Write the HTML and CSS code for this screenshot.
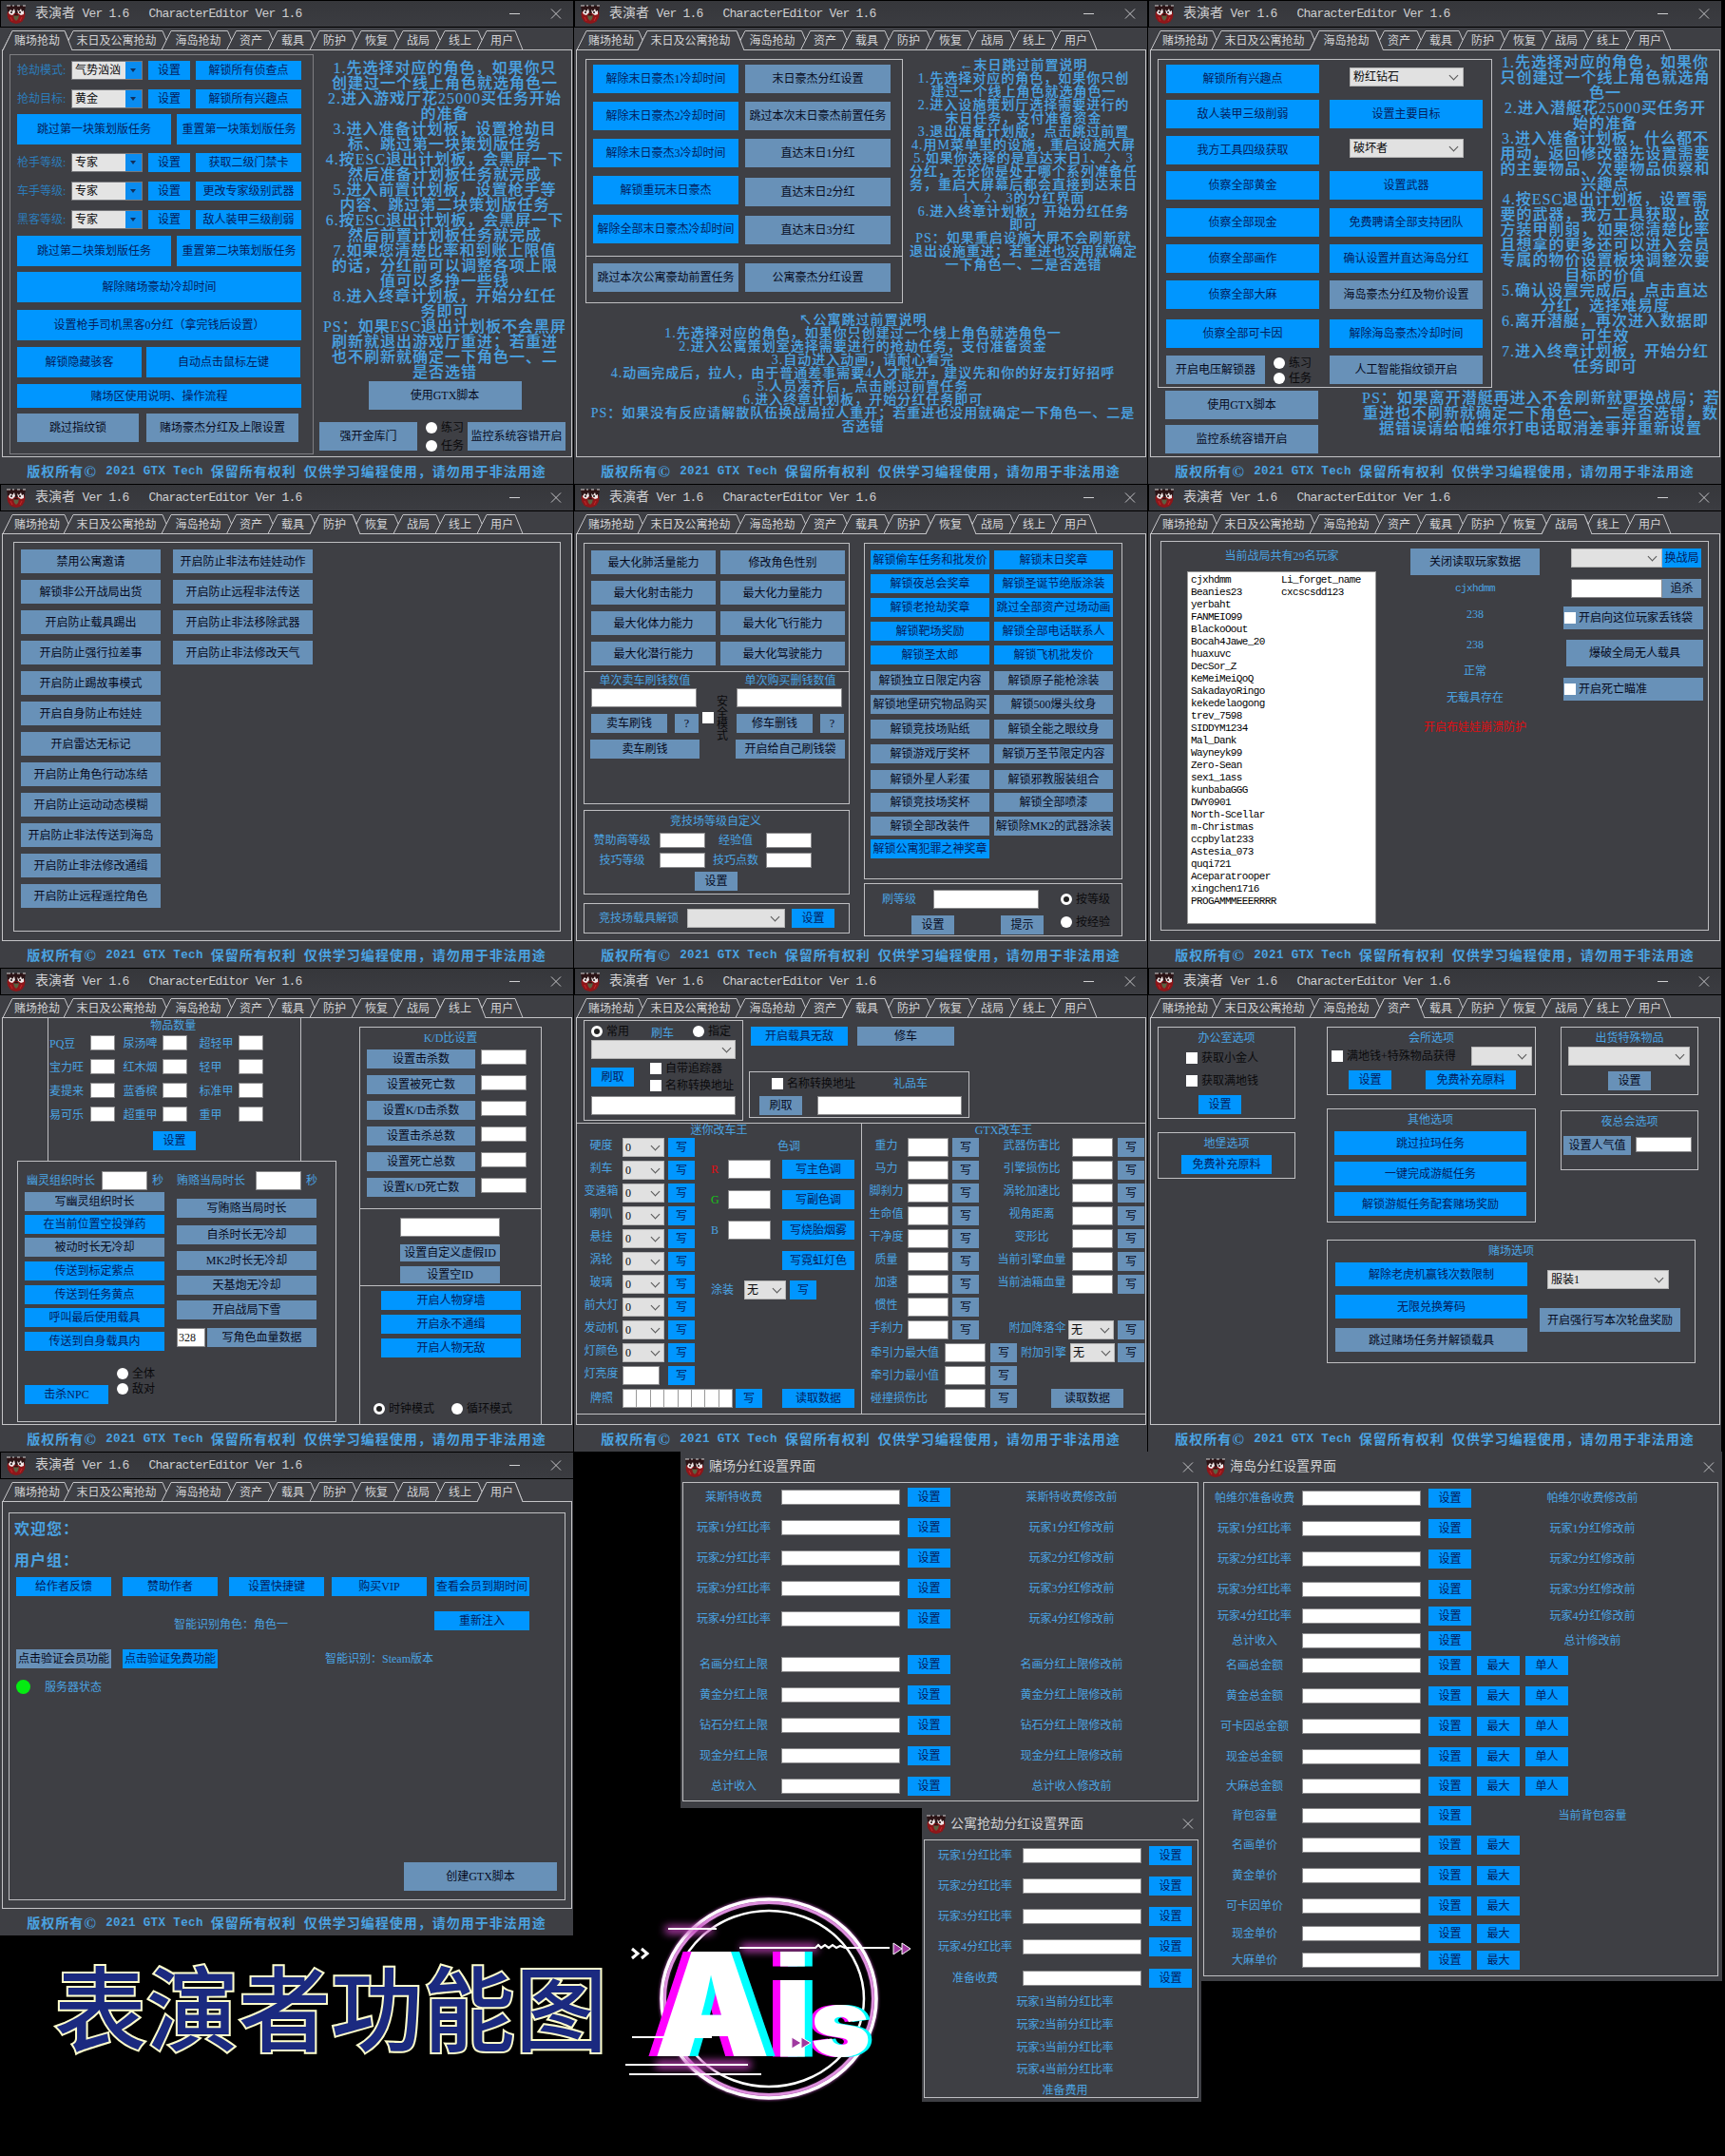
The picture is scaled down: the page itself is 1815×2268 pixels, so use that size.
FILE: index.html
```html
<!DOCTYPE html>
<html lang="zh-CN">
<head>
<meta charset="utf-8">
<title>表演者功能图</title>
<link rel="stylesheet" href="styles.css">
</head>
<body>
<svg class="defs" width="0" height="0">
  <symbol id="app" viewBox="0 0 22 20">
    <circle cx="11" cy="10.500" r="9.400" fill="#8e1619"/>
    <path d="M1 1h20l-1 6-3 2H5L2 7z" fill="#2c1416"/>
    <path d="M1 1h4M7 1h2M12 1h3M18 1h3" stroke="#d8d4d4" stroke-width="1"/>
    <path d="M3 8l2-3 2 2 2-3 1 4-3 3-3-1zM12 5l2 2 2-3 1 3 2-1 0 4-3 1-3-2z" fill="#efe6e6"/>
    <path d="M5 8h2M14 8h2M8 12l3-2 3 2" stroke="#201012" stroke-width="1.3" fill="none"/>
    <path d="M8 11l3 1 3-1-1 4-2 2-2-2z" fill="#5b6142"/>
    <path d="M5 13l2 4M17 13l-2 4" stroke="#c9282b"/>
  </symbol>
  <symbol id="strip" viewBox="0 0 603 21">
    <path fill="none" stroke="#c4c4c7" d="M3 20.5L13 .5H68L72 10M67 20.5L77 .5H171L175 10M170 20.5L180 .5H239.5L243.5 10M238.5 20.5L248.5 .5H283L287 10M282 20.5L292 .5H327L331 10M326 20.5L336 .5H371L375 10M370 20.5L380 .5H415L419 10M414 20.5L424 .5H459L463 10M458 20.5L468 .5H503L507 10M502 20.5L512 .5H542L550 20.5"/>
  </symbol>
  <symbol id="x" viewBox="0 0 12 12"><path d="M.5.5l11 11M11.5.5l-11 11" stroke="#d0d0d2" fill="none"/></symbol>
</svg>

<main class="desk">

<!-- 赌场抢劫 -->
<section class="win">
  <header><svg class="ico"><use href="#app"/></svg><h2>表演者 <span>Ver 1.6</span><span>CharacterEditor Ver 1.6</span></h2><i class="min"></i><svg class="x"><use href="#x"/></svg></header>
  <nav><svg><use href="#strip"/><path d="M3 21L13 .5H68L76 21"/></svg><b>赌场抢劫</b><b>末日及公寓抢劫</b><b>海岛抢劫</b><b>资产</b><b>载具</b><b>防护</b><b>恢复</b><b>战局</b><b>线上</b><b>用户</b></nav>
  <div class="page p1">
    <div class="box rows">
      <div class="set"><span class="t">抢劫模式:</span><div class="old">气势汹汹</div><button class="p">设置</button><button class="p">解锁所有侦查点</button></div>
      <div class="set"><span class="t">抢劫目标:</span><div class="old">黄金</div><button class="p">设置</button><button class="p">解锁所有兴趣点</button></div>
      <div class="wide-l tall"><button class="p">跳过第一块策划版任务</button><button class="p">重置第一块策划版任务</button></div>
      <div class="set"><span class="t">枪手等级:</span><div class="old">专家</div><button class="p">设置</button><button class="p">获取二级门禁卡</button></div>
      <div class="set"><span class="t">车手等级:</span><div class="old">专家</div><button class="p">设置</button><button class="p">更改专家级别武器</button></div>
      <div class="set"><span class="t">黑客等级:</span><div class="old">专家</div><button class="p">设置</button><button class="p">敌人装甲三级削弱</button></div>
      <div class="wide-l tall"><button class="p">跳过第二块策划版任务</button><button class="p">重置第二块策划版任务</button></div>
      <div class="one tall"><button class="p">解除赌场豪劫冷却时间</button></div>
      <div class="one tall"><button class="p">设置枪手司机黑客0分红（拿完钱后设置）</button></div>
      <div class="wide-r tall"><button class="p">解锁隐藏骇客</button><button class="p">自动点击鼠标左键</button></div>
      <div class="one mid"><button class="p">赌场区使用说明、操作流程</button></div>
      <div class="wide-r h30"><button>跳过指纹锁</button><button>赌场豪杰分红及上限设置</button></div>
    </div>
    <div class="side">
      <p class="help">1.先选择对应的角色，如果你只<br>创建过一个线上角色就选角色一<br>2.进入游戏厅花25000买任务开始<br>的准备<br>3.进入准备计划板，设置抢劫目<br>标、跳过第一块策划版任务<br>4.按ESC退出计划板，会黑屏一下<br>然后准备计划板任务就完成<br>5.进入前置计划板，设置枪手等<br>内容、跳过第二块策划版任务<br>6.按ESC退出计划板，会黑屏一下<br>然后前置计划板任务就完成<br>7.如果您清楚比率和到账上限值<br>的话，分红前可以调整各项上限<br>值可以多挣一些钱<br>8.进入终章计划板，开始分红任<br>务即可<br>PS：如果ESC退出计划板不会黑屏<br>刷新就退出游戏厅重进；若重进<br>也不刷新就确定一下角色一、二<br>是否选错</p>
      <button class="gtx">使用GTX脚本</button>
      <div class="foot"><button>强开金库门</button><div class="radios"><label><i class="rd"></i>练习</label><label><i class="rd"></i>任务</label></div><button>监控系统容错开启</button></div>
    </div>
  </div>
  <footer>版权所有<em>©</em><span>&nbsp;2021 GTX Tech </span>保留所有权利<span>&nbsp;</span>仅供学习编程使用，请勿用于非法用途</footer>
</section>

<!-- 末日及公寓抢劫 -->
<section class="win">
  <header><svg class="ico"><use href="#app"/></svg><h2>表演者 <span>Ver 1.6</span><span>CharacterEditor Ver 1.6</span></h2><i class="min"></i><svg class="x"><use href="#x"/></svg></header>
  <nav><svg><use href="#strip"/><path d="M67 21L77 .5H171L179 21"/></svg><b>赌场抢劫</b><b>末日及公寓抢劫</b><b>海岛抢劫</b><b>资产</b><b>载具</b><b>防护</b><b>恢复</b><b>战局</b><b>线上</b><b>用户</b></nav>
  <div class="page p2">
    <div class="top">
      <div>
        <div class="box pair">
          <button class="p">解除末日豪杰1冷却时间</button><button>末日豪杰分红设置</button>
          <button class="p">解除末日豪杰2冷却时间</button><button>跳过本次末日豪杰前置任务</button>
          <button class="p">解除末日豪杰3冷却时间</button><button>直达末日1分红</button>
          <button class="p">解锁重玩末日豪杰</button><button class="low">直达末日2分红</button>
          <button class="p">解除全部末日豪杰冷却时间</button><button class="low1">直达末日3分红</button>
        </div>
        <div class="box pair second"><button>跳过本次公寓豪劫前置任务</button><button>公寓豪杰分红设置</button></div>
      </div>
      <p class="help sm">←末日跳过前置说明<br>1.先选择对应的角色，如果你只创<br>建过一个线上角色就选角色一<br>2.进入设施策划厅选择需要进行的<br>末日任务，支付准备资金<br>3.退出准备计划版，点击跳过前置<br>4.用M菜单里的设施，重启设施大屏<br>5.如果你选择的是直达末日1、2、3<br>分红，无论你是处于哪个系列准备任<br>务，重启大屏幕后都会直接到达末日<br>1、2、3的分红界面<br>6.进入终章计划板，开始分红任务<br>即可<br>PS：如果重启设施大屏不会刷新就<br>退出设施重进；若重进也没用就确定<br>一下角色一、二是否选错</p>
    </div>
    <p class="help sm">↖公寓跳过前置说明<br>1.先选择对应的角色，如果你只创建过一个线上角色就选角色一<br>2.进入公寓策划室选择需要进行的抢劫任务，支付准备资金<br>3.自动进入动画，请耐心看完<br>4.动画完成后，拉人，由于普通差事需要4人才能开，建议先和你的好友打好招呼<br>5.人员凑齐后，点击跳过前置任务<br>6.进入终章计划板，开始分红任务即可<br>PS：如果没有反应请解散队伍换战局拉人重开；若重进也没用就确定一下角色一、二是<br>否选错</p>
  </div>
  <footer>版权所有<em>©</em><span>&nbsp;2021 GTX Tech </span>保留所有权利<span>&nbsp;</span>仅供学习编程使用，请勿用于非法用途</footer>
</section>

<!-- 海岛抢劫 -->
<section class="win">
  <header><svg class="ico"><use href="#app"/></svg><h2>表演者 <span>Ver 1.6</span><span>CharacterEditor Ver 1.6</span></h2><i class="min"></i><svg class="x"><use href="#x"/></svg></header>
  <nav><svg><use href="#strip"/><path d="M170 21L180 .5H239.5L247.5 21"/></svg><b>赌场抢劫</b><b>末日及公寓抢劫</b><b>海岛抢劫</b><b>资产</b><b>载具</b><b>防护</b><b>恢复</b><b>战局</b><b>线上</b><b>用户</b></nav>
  <div class="page p3">
    <div class="top">
      <div class="box">
        <div class="rows">
          <button class="p">解锁所有兴趣点</button><button class="p">敌人装甲三级削弱</button><button class="p">我方工具四级获取</button><button class="p">侦察全部黄金</button><button class="p">侦察全部现金</button><button class="p">侦察全部画作</button><button class="p">侦察全部大麻</button><button class="p">侦察全部可卡因</button>
          <div class="volt"><button>开启电压解锁器</button><div class="radios"><label><i class="rd"></i>练习</label><label><i class="rd"></i>任务</label></div></div>
        </div>
        <div class="rows">
          <div class="sel">粉红钻石</div><button class="p">设置主要目标</button><div class="sel">破坏者</div><button class="p">设置武器</button><button class="p">免费聘请全部支持团队</button><button class="p">确认设置并直达海岛分红</button><button>海岛豪杰分红及物价设置</button><button class="p">解除海岛豪杰冷却时间</button><button>人工智能指纹锁开启</button>
        </div>
      </div>
      <p class="help">1.先选择对应的角色，如果你<br>只创建过一个线上角色就选角<br>色一<br>2.进入潜艇花25000买任务开<br>始的准备<br>3.进入准备计划板，什么都不<br>用动，返回修改器先设置需要<br>的主要物品、次要物品侦察和<br>兴趣点<br>4.按ESC退出计划板，设置需<br>要的武器，我方工具获取，敌<br>方装甲削弱，如果您清楚比率<br>且想拿的更多还可以进入会员<br>专属的物价设置板块调整次要<br>目标的价值<br>5.确认设置完成后，点击直达<br>分红，选择难易度<br>6.离开潜艇，再次进入数据即<br>可生效<br>7.进入终章计划板，开始分红<br>任务即可</p>
    </div>
    <div class="bottom">
      <div><button>使用GTX脚本</button><button>监控系统容错开启</button></div>
      <p class="help">PS：如果离开潜艇再进入不会刷新就更换战局；若<br>重进也不刷新就确定一下角色一、二是否选错，数<br>据错误请给帕维尔打电话取消差事并重新设置</p>
    </div>
  </div>
  <footer>版权所有<em>©</em><span>&nbsp;2021 GTX Tech </span>保留所有权利<span>&nbsp;</span>仅供学习编程使用，请勿用于非法用途</footer>
</section>

<!-- 防护 -->
<section class="win">
  <header><svg class="ico"><use href="#app"/></svg><h2>表演者 <span>Ver 1.6</span><span>CharacterEditor Ver 1.6</span></h2><i class="min"></i><svg class="x"><use href="#x"/></svg></header>
  <nav><svg><use href="#strip"/><path d="M326 21L336 .5H371L379 21"/></svg><b>赌场抢劫</b><b>末日及公寓抢劫</b><b>海岛抢劫</b><b>资产</b><b>载具</b><b>防护</b><b>恢复</b><b>战局</b><b>线上</b><b>用户</b></nav>
  <div class="page p4">
    <div class="box">
      <div><button>禁用公寓邀请</button><button>解锁非公开战局出货</button><button>开启防止载具踢出</button><button>开启防止强行拉差事</button><button>开启防止踢故事模式</button><button>开启自身防止布娃娃</button><button>开启雷达无标记</button><button>开启防止角色行动冻结</button><button>开启防止运动动态模糊</button><button>开启防止非法传送到海岛</button><button>开启防止非法修改通缉</button><button>开启防止远程遥控角色</button></div>
      <div><button>开启防止非法布娃娃动作</button><button>开启防止远程非法传送</button><button>开启防止非法移除武器</button><button>开启防止非法修改天气</button></div>
    </div>
  </div>
  <footer>版权所有<em>©</em><span>&nbsp;2021 GTX Tech </span>保留所有权利<span>&nbsp;</span>仅供学习编程使用，请勿用于非法用途</footer>
</section>

<!-- 恢复 -->
<section class="win">
  <header><svg class="ico"><use href="#app"/></svg><h2>表演者 <span>Ver 1.6</span><span>CharacterEditor Ver 1.6</span></h2><i class="min"></i><svg class="x"><use href="#x"/></svg></header>
  <nav><svg><use href="#strip"/><path d="M370 21L380 .5H415L423 21"/></svg><b>赌场抢劫</b><b>末日及公寓抢劫</b><b>海岛抢劫</b><b>资产</b><b>载具</b><b>防护</b><b>恢复</b><b>战局</b><b>线上</b><b>用户</b></nav>
  <div class="page p5">
    <div class="l">
      <div class="box skills"><button>最大化肺活量能力</button><button>修改角色性别</button><button>最大化射击能力</button><button>最大化力量能力</button><button>最大化体力能力</button><button>最大化飞行能力</button><button>最大化潜行能力</button><button>最大化驾驶能力</button></div>
      <div class="box cash">
        <div class="rows"><span class="t">单次卖车刷钱数值</span><input><div><button>卖车刷钱</button><button>?</button></div><button>卖车刷钱</button></div>
        <label class="safe"><i class="ck"></i><span>安全模式</span></label>
        <div class="rows"><span class="t">单次购买删钱数值</span><input><div><button>修车删钱</button><button>?</button></div><button>开启给自己刷钱袋</button></div>
      </div>
      <div class="box arena">
        <span class="t cap">竞技场等级自定义</span>
        <span class="t">赞助商等级</span><input><span class="t">经验值</span><input>
        <span class="t">技巧等级</span><input><span class="t">技巧点数</span><input>
        <button>设置</button>
      </div>
      <div class="box unlock"><span class="t">竞技场载具解锁</span><div class="sel"></div><button class="p">设置</button></div>
    </div>
    <div class="r">
      <div class="box rows awards">
        <button class="p">解锁偷车任务和批发价</button><button class="p">解锁末日奖章</button>
        <button class="p">解锁夜总会奖章</button><button class="p">解锁圣诞节绝版涂装</button>
        <button class="p">解锁老抢劫奖章</button><button class="p">跳过全部资产过场动画</button>
        <button class="p">解锁靶场奖励</button><button class="p">解锁全部电话联系人</button>
        <button class="p">解锁圣太郎</button><button class="p">解锁飞机批发价</button>
        <button>解锁独立日限定内容</button><button>解锁原子能枪涂装</button>
        <button>解锁地堡研究物品购买</button><button>解锁500爆头纹身</button>
        <button>解锁竞技场贴纸</button><button>解锁全能之眼纹身</button>
        <button>解锁游戏厅奖杯</button><button>解锁万圣节限定内容</button>
        <button>解锁外星人彩蛋</button><button>解锁邪教服装组合</button>
        <button>解锁竞技场奖杯</button><button>解锁全部喷漆</button>
        <button>解锁全部改装件</button><button>解锁除MK2的武器涂装</button>
        <button class="p">解锁公寓犯罪之神奖章</button>
      </div>
      <div class="box level">
        <div><span class="t">刷等级</span><input><br><button>设置</button><button>提示</button></div>
        <div class="radios"><label><i class="rd on"></i>按等级</label><label><i class="rd"></i>按经验</label></div>
      </div>
    </div>
  </div>
  <footer>版权所有<em>©</em><span>&nbsp;2021 GTX Tech </span>保留所有权利<span>&nbsp;</span>仅供学习编程使用，请勿用于非法用途</footer>
</section>

<!-- 战局 -->
<section class="win">
  <header><svg class="ico"><use href="#app"/></svg><h2>表演者 <span>Ver 1.6</span><span>CharacterEditor Ver 1.6</span></h2><i class="min"></i><svg class="x"><use href="#x"/></svg></header>
  <nav><svg><use href="#strip"/><path d="M414 21L424 .5H459L467 21"/></svg><b>赌场抢劫</b><b>末日及公寓抢劫</b><b>海岛抢劫</b><b>资产</b><b>载具</b><b>防护</b><b>恢复</b><b>战局</b><b>线上</b><b>用户</b></nav>
  <div class="page p6">
    <div class="box">
      <div class="players"><span class="t">当前战局共有29名玩家</span>
        <div class="list"><pre>cjxhdmm
Beanies23
yerbaht
FANMEIO99
BlackoOout
Bocah4Jawe_20
huaxuvc
DecSor_Z
KeMeiMeiQoQ
SakadayoRingo
kekedelaogong
trev_7598
SIDDYM1234
Mal_Dank
Wayneyk99
Zero-Sean
sex1_1ass
kunbabaGGG
DWY0901
North-Scellar
m-Christmas
ccpbylat233
Astesia_073
quqi721
Aceparatrooper
xingchen1716
PROGAMMMEEERRRR</pre><pre>Li_forget_name
cxcscsdd123</pre></div>
      </div>
      <div class="rows info"><button>关闭读取玩家数据</button><span class="t mono">cjxhdmm</span><span class="t">238</span><span class="t">238</span><span class="t">正常</span><span class="t">无载具存在</span><span class="t red">开启布娃娃崩溃防护</span></div>
      <div class="rows acts">
        <div><div class="sel"></div><button class="p">换战局</button></div>
        <div><input><button>追杀</button></div>
        <button class="chk"><i class="ck"></i>开启向这位玩家丢钱袋</button>
        <button>爆破全局无人载具</button>
        <button class="chk"><i class="ck"></i>开启死亡瞄准</button>
      </div>
    </div>
  </div>
  <footer>版权所有<em>©</em><span>&nbsp;2021 GTX Tech </span>保留所有权利<span>&nbsp;</span>仅供学习编程使用，请勿用于非法用途</footer>
</section>

<!-- 线上 -->
<section class="win">
  <header><svg class="ico"><use href="#app"/></svg><h2>表演者 <span>Ver 1.6</span><span>CharacterEditor Ver 1.6</span></h2><i class="min"></i><svg class="x"><use href="#x"/></svg></header>
  <nav><svg><use href="#strip"/><path d="M458 21L468 .5H503L511 21"/></svg><b>赌场抢劫</b><b>末日及公寓抢劫</b><b>海岛抢劫</b><b>资产</b><b>载具</b><b>防护</b><b>恢复</b><b>战局</b><b>线上</b><b>用户</b></nav>
  <div class="page p7">
    <div class="l">
      <div class="items">
        <span class="t cap">物品数量</span>
        <span class="t">PQ豆</span><input><span class="t">尿汤啤</span><input><span class="t">超轻甲</span><input>
        <span class="t">宝力旺</span><input><span class="t">红木烟</span><input><span class="t">轻甲</span><input>
        <span class="t">麦提来</span><input><span class="t">蓝香槟</span><input><span class="t">标准甲</span><input>
        <span class="t">易可乐</span><input><span class="t">超重甲</span><input><span class="t">重甲</span><input>
        <button class="p">设置</button>
      </div>
      <div class="box self">
        <div class="times"><span class="t">幽灵组织时长</span><input><span class="t">秒</span><span class="t">贿赂当局时长</span><input><span class="t">秒</span></div>
        <div class="cols">
          <div class="rows"><button>写幽灵组织时长</button><button class="p">在当前位置空投弹药</button><button>被动时长无冷却</button><button class="p">传送到标定紫点</button><button class="p">传送到任务黄点</button><button class="p">呼叫最后使用载具</button><button class="p">传送到自身载具内</button></div>
          <div class="rows"><button>写贿赂当局时长</button><button>自杀时长无冷却</button><button>MK2时长无冷却</button><button>天基炮无冷却</button><button>开启战局下雪</button><div class="hp"><input value="328"><button>写角色血量数据</button></div></div>
        </div>
        <div class="npc"><button class="p">击杀NPC</button><div class="radios"><label><i class="rd"></i>全体</label><label><i class="rd"></i>敌对</label></div></div>
      </div>
    </div>
    <div class="box r">
      <span class="t cap">K/D比设置</span>
      <div class="kd"><div class="rows"><button>设置击杀数</button><button>设置被死亡数</button><button>设置K/D击杀数</button><button>设置击杀总数</button><button>设置死亡总数</button><button>设置K/D死亡数</button></div><div class="rows"><input><input><input><input><input><input></div></div>
      <div class="ids"><input><button>设置自定义虚假ID</button><button>设置空ID</button></div>
      <div class="god"><button class="p">开启人物穿墙</button><button class="p">开启永不通缉</button><button class="p">开启人物无敌</button></div>
      <div class="mode"><label><i class="rd on"></i>时钟模式</label><label><i class="rd"></i>循环模式</label></div>
    </div>
  </div>
  <footer>版权所有<em>©</em><span>&nbsp;2021 GTX Tech </span>保留所有权利<span>&nbsp;</span>仅供学习编程使用，请勿用于非法用途</footer>
</section>

<!-- 载具 -->
<section class="win">
  <header><svg class="ico"><use href="#app"/></svg><h2>表演者 <span>Ver 1.6</span><span>CharacterEditor Ver 1.6</span></h2><i class="min"></i><svg class="x"><use href="#x"/></svg></header>
  <nav><svg><use href="#strip"/><path d="M282 21L292 .5H327L335 21"/></svg><b>赌场抢劫</b><b>末日及公寓抢劫</b><b>海岛抢劫</b><b>资产</b><b>载具</b><b>防护</b><b>恢复</b><b>战局</b><b>线上</b><b>用户</b></nav>
  <div class="page p8">
    <div class="top">
      <div class="box spawn">
        <div class="kind"><label><i class="rd on"></i>常用</label><span class="t">刷车</span><label><i class="rd"></i>指定</label></div>
        <div class="sel"></div>
        <div class="get"><button class="p">刷取</button><div><label><i class="ck"></i>自带追踪器</label><label><i class="ck"></i>名称转换地址</label></div></div>
        <input>
      </div>
      <div class="more">
        <div class="acts"><button class="p">开启载具无敌</button><button>修车</button></div>
        <div class="box gift">
          <div><label><i class="ck"></i>名称转换地址</label><span class="t">礼品车</span></div>
          <div><button>刷取</button><input></div>
        </div>
      </div>
    </div>
    <div class="tune">
      <div class="mini">
        <span class="t cap">迷你改车王</span>
        <div class="cols">
          <div class="parts">
            <span class="t">硬度</span><div class="sel">0</div><button class="p">写</button>
            <span class="t">刹车</span><div class="sel">0</div><button class="p">写</button>
            <span class="t">变速箱</span><div class="sel">0</div><button class="p">写</button>
            <span class="t">喇叭</span><div class="sel">0</div><button class="p">写</button>
            <span class="t">悬挂</span><div class="sel">0</div><button class="p">写</button>
            <span class="t">涡轮</span><div class="sel">0</div><button class="p">写</button>
            <span class="t">玻璃</span><div class="sel">0</div><button class="p">写</button>
            <span class="t">前大灯</span><div class="sel">0</div><button class="p">写</button>
            <span class="t">发动机</span><div class="sel">0</div><button class="p">写</button>
            <span class="t">灯颜色</span><div class="sel">0</div><button class="p">写</button>
            <span class="t">灯亮度</span><input><button class="p">写</button>
          </div>
          <div class="paint">
            <span class="t hue">色调</span>
            <div><span class="t red">R</span><input><button class="p">写主色调</button></div>
            <div><span class="t green">G</span><input><button class="p">写副色调</button></div>
            <div><span class="t">B</span><input><button class="p">写烧胎烟雾</button></div>
            <div><button class="p">写霓虹灯色</button></div>
            <div class="livery"><span class="t">涂装</span><div class="sel">无</div><button class="p">写</button></div>
          </div>
        </div>
        <div class="plate"><span class="t">牌照</span><div><i></i><i></i><i></i><i></i><i></i><i></i><i></i><i></i></div><button class="p">写</button><button class="p">读取数据</button></div>
      </div>
      <div class="pro">
        <span class="t cap">GTX改车王</span>
        <div class="cols">
          <div class="parts">
            <span class="t">重力</span><input><button>写</button>
            <span class="t">马力</span><input><button>写</button>
            <span class="t">脚刹力</span><input><button>写</button>
            <span class="t">生命值</span><input><button>写</button>
            <span class="t">干净度</span><input><button>写</button>
            <span class="t">质量</span><input><button>写</button>
            <span class="t">加速</span><input><button>写</button>
            <span class="t">惯性</span><input><button>写</button>
            <span class="t">手刹力</span><input><button>写</button>
          </div>
          <div class="parts b">
            <span class="t">武器伤害比</span><input><button>写</button>
            <span class="t">引擎损伤比</span><input><button>写</button>
            <span class="t">涡轮加速比</span><input><button>写</button>
            <span class="t">视角距离</span><input><button>写</button>
            <span class="t">变形比</span><input><button>写</button>
            <span class="t">当前引擎血量</span><input><button>写</button>
            <span class="t">当前油箱血量</span><input><button>写</button>
            <span></span><span></span><span></span>
            <span class="t far">附加降落伞</span><div class="sel">无</div><button>写</button>
          </div>
        </div>
        <div class="pull"><span class="t">牵引力最大值</span><input><button>写</button><span class="t">附加引擎</span><div class="sel">无</div><button>写</button></div>
        <div class="pull"><span class="t">牵引力最小值</span><input><button>写</button></div>
        <div class="pull"><span class="t">碰撞损伤比</span><input><button>写</button><button class="read">读取数据</button></div>
      </div>
    </div>
  </div>
  <footer>版权所有<em>©</em><span>&nbsp;2021 GTX Tech </span>保留所有权利<span>&nbsp;</span>仅供学习编程使用，请勿用于非法用途</footer>
</section>

<!-- 资产 -->
<section class="win">
  <header><svg class="ico"><use href="#app"/></svg><h2>表演者 <span>Ver 1.6</span><span>CharacterEditor Ver 1.6</span></h2><i class="min"></i><svg class="x"><use href="#x"/></svg></header>
  <nav><svg><use href="#strip"/><path d="M238.5 21L248.5 .5H283L291 21"/></svg><b>赌场抢劫</b><b>末日及公寓抢劫</b><b>海岛抢劫</b><b>资产</b><b>载具</b><b>防护</b><b>恢复</b><b>战局</b><b>线上</b><b>用户</b></nav>
  <div class="page p9">
    <div class="a">
      <div class="box office"><span class="t cap">办公室选项</span><label><i class="ck"></i>获取小金人</label><label><i class="ck"></i>获取满地钱</label><button class="p">设置</button></div>
      <div class="box bunker"><span class="t cap">地堡选项</span><button class="p">免费补充原料</button></div>
    </div>
    <div class="b">
      <div class="pairs">
        <div class="box club"><span class="t cap">会所选项</span><div><label><i class="ck"></i>满地钱+特殊物品获得</label><div class="sel"></div></div><div class="btns"><button class="p">设置</button><button class="p">免费补充原料</button></div></div>
        <div class="box cargo"><span class="t cap">出货特殊物品</span><div class="sel"></div><button>设置</button></div>
      </div>
      <div class="pairs">
        <div class="box other"><span class="t cap">其他选项</span><button class="p">跳过拉玛任务</button><button class="p">一键完成游艇任务</button><button class="p">解锁游艇任务配套赌场奖励</button></div>
        <div class="box night"><span class="t cap">夜总会选项</span><div><button>设置人气值</button><input></div></div>
      </div>
      <div class="box casino"><span class="t cap">赌场选项</span>
        <div class="cols"><div class="rows"><button class="p">解除老虎机赢钱次数限制</button><button class="p">无限兑换筹码</button><button>跳过赌场任务并解锁载具</button></div>
        <div class="wheel"><div class="sel">服装1</div><button>开启强行写本次轮盘奖励</button></div></div>
      </div>
    </div>
  </div>
  <footer>版权所有<em>©</em><span>&nbsp;2021 GTX Tech </span>保留所有权利<span>&nbsp;</span>仅供学习编程使用，请勿用于非法用途</footer>
</section>

<!-- 用户 -->
<section class="win">
  <header><svg class="ico"><use href="#app"/></svg><h2>表演者 <span>Ver 1.6</span><span>CharacterEditor Ver 1.6</span></h2><i class="min"></i><svg class="x"><use href="#x"/></svg></header>
  <nav><svg><use href="#strip"/><path d="M502 21L512 .5H542L550 21"/></svg><b>赌场抢劫</b><b>末日及公寓抢劫</b><b>海岛抢劫</b><b>资产</b><b>载具</b><b>防护</b><b>恢复</b><b>战局</b><b>线上</b><b>用户</b></nav>
  <div class="page p10">
    <div class="box">
      <strong>欢迎您：</strong>
      <strong>用户组：</strong>
      <div class="acts"><button class="p">给作者反馈</button><button class="p">赞助作者</button><button class="p">设置快捷键</button><button class="p">购买VIP</button><button class="p">查看会员到期时间</button></div>
      <div class="role"><span class="t">智能识别角色：角色一</span><button class="p">重新注入</button></div>
      <div class="verify"><button>点击验证会员功能</button><button class="p">点击验证免费功能</button><span class="t">智能识别：Steam版本</span></div>
      <div class="status"><i></i><span class="t">服务器状态</span></div>
      <button class="make">创建GTX脚本</button>
    </div>
  </div>
  <footer>版权所有<em>©</em><span>&nbsp;2021 GTX Tech </span>保留所有权利<span>&nbsp;</span>仅供学习编程使用，请勿用于非法用途</footer>
</section>

</main>

<section class="dlg d-casino">
  <header><svg class="ico"><use href="#app"/></svg><h2>赌场分红设置界面</h2><svg class="x"><use href="#x"/></svg></header>
  <div class="body rows">
    <div><span class="t">莱斯特收费</span><input><button class="p">设置</button><span class="t now">莱斯特收费修改前</span></div>
    <div><span class="t">玩家1分红比率</span><input><button class="p">设置</button><span class="t now">玩家1分红修改前</span></div>
    <div><span class="t">玩家2分红比率</span><input><button class="p">设置</button><span class="t now">玩家2分红修改前</span></div>
    <div><span class="t">玩家3分红比率</span><input><button class="p">设置</button><span class="t now">玩家3分红修改前</span></div>
    <div><span class="t">玩家4分红比率</span><input><button class="p">设置</button><span class="t now">玩家4分红修改前</span></div>
    <div><span class="t">名画分红上限</span><input><button class="p">设置</button><span class="t now">名画分红上限修改前</span></div>
    <div><span class="t">黄金分红上限</span><input><button class="p">设置</button><span class="t now">黄金分红上限修改前</span></div>
    <div><span class="t">钻石分红上限</span><input><button class="p">设置</button><span class="t now">钻石分红上限修改前</span></div>
    <div><span class="t">现金分红上限</span><input><button class="p">设置</button><span class="t now">现金分红上限修改前</span></div>
    <div><span class="t">总计收入</span><input><button class="p">设置</button><span class="t now">总计收入修改前</span></div>
  </div>
</section>

<section class="dlg d-apt">
  <header><svg class="ico"><use href="#app"/></svg><h2>公寓抢劫分红设置界面</h2><svg class="x"><use href="#x"/></svg></header>
  <div class="body rows">
    <div><span class="t">玩家1分红比率</span><input><button class="p">设置</button></div>
    <div><span class="t">玩家2分红比率</span><input><button class="p">设置</button></div>
    <div><span class="t">玩家3分红比率</span><input><button class="p">设置</button></div>
    <div><span class="t">玩家4分红比率</span><input><button class="p">设置</button></div>
    <div><span class="t">准备收费</span><input><button class="p">设置</button></div>
    <span class="t">玩家1当前分红比率</span><span class="t">玩家2当前分红比率</span><span class="t">玩家3当前分红比率</span><span class="t">玩家4当前分红比率</span><span class="t">准备费用</span>
  </div>
</section>

<section class="dlg d-island">
  <header><svg class="ico"><use href="#app"/></svg><h2>海岛分红设置界面</h2><svg class="x"><use href="#x"/></svg></header>
  <div class="body rows">
    <div><span class="t">帕维尔准备收费</span><input><button class="p">设置</button><span class="t now">帕维尔收费修改前</span></div>
    <div><span class="t">玩家1分红比率</span><input><button class="p">设置</button><span class="t now">玩家1分红修改前</span></div>
    <div><span class="t">玩家2分红比率</span><input><button class="p">设置</button><span class="t now">玩家2分红修改前</span></div>
    <div><span class="t">玩家3分红比率</span><input><button class="p">设置</button><span class="t now">玩家3分红修改前</span></div>
    <div><span class="t">玩家4分红比率</span><input><button class="p">设置</button><span class="t now">玩家4分红修改前</span></div>
    <div><span class="t">总计收入</span><input><button class="p">设置</button><span class="t now">总计修改前</span></div>
    <div><span class="t">名画总金额</span><input><button class="p">设置</button><button class="p">最大</button><button class="p">单人</button></div>
    <div><span class="t">黄金总金额</span><input><button class="p">设置</button><button class="p">最大</button><button class="p">单人</button></div>
    <div><span class="t">可卡因总金额</span><input><button class="p">设置</button><button class="p">最大</button><button class="p">单人</button></div>
    <div><span class="t">现金总金额</span><input><button class="p">设置</button><button class="p">最大</button><button class="p">单人</button></div>
    <div><span class="t">大麻总金额</span><input><button class="p">设置</button><button class="p">最大</button><button class="p">单人</button></div>
    <div><span class="t">背包容量</span><input><button class="p">设置</button><span class="t now">当前背包容量</span></div>
    <div><span class="t">名画单价</span><input><button class="p">设置</button><button class="p">最大</button></div>
    <div><span class="t">黄金单价</span><input><button class="p">设置</button><button class="p">最大</button></div>
    <div><span class="t">可卡因单价</span><input><button class="p">设置</button><button class="p">最大</button></div>
    <div><span class="t">现金单价</span><input><button class="p">设置</button><button class="p">最大</button></div>
    <div><span class="t">大麻单价</span><input><button class="p">设置</button><button class="p">最大</button></div>
  </div>
</section>

<h1>表演者功能图</h1>

<svg class="logo" viewBox="655 1990 305 225">
  <defs><filter id="glow" x="-30%" y="-300%" width="160%" height="700%"><feGaussianBlur stdDeviation="4"/></filter><filter id="soft"><feGaussianBlur stdDeviation="1.5"/></filter></defs>
  <ellipse cx="809" cy="2102.500" rx="112" ry="103.500" fill="none" stroke="#b055b0" stroke-width="6" filter="url(#soft)"/>
  <ellipse cx="809" cy="2102.500" rx="113" ry="104.500" fill="none" stroke="#fff" stroke-width="3.500"/>
  <ellipse cx="809" cy="2102.500" rx="109.500" ry="101" fill="none" stroke="#dc8edc" stroke-width="3"/>
  <ellipse cx="809" cy="2102.500" rx="100" ry="92.500" fill="none" stroke="#fff" stroke-width="2.500"/>
  <path d="M780 2049h80M700 2030h50M690 2172h100" stroke="#c040b8" stroke-width="8" filter="url(#glow)"/>
  <g class="mark">
    <g fill="#ff00ff"><text x="679" y="2163" font-size="151" textLength="122" lengthAdjust="spacingAndGlyphs">A</text><text class="sq" x="800" y="2163" font-size="152" textLength="52" lengthAdjust="spacingAndGlyphs">i</text><text x="849" y="2163" font-size="98" textLength="63" lengthAdjust="spacingAndGlyphs">s</text></g>
    <g fill="#00ffff"><text x="697" y="2163" font-size="151" textLength="122" lengthAdjust="spacingAndGlyphs">A</text><text class="sq" x="816" y="2163" font-size="152" textLength="52" lengthAdjust="spacingAndGlyphs">i</text><text x="857" y="2163" font-size="98" textLength="63" lengthAdjust="spacingAndGlyphs">s</text></g>
    <g fill="#fff"><text x="688" y="2163" font-size="151" textLength="122" lengthAdjust="spacingAndGlyphs">A</text><text class="sq" x="808" y="2163" font-size="152" textLength="52" lengthAdjust="spacingAndGlyphs">i</text><text x="853" y="2163" font-size="98" textLength="63" lengthAdjust="spacingAndGlyphs">s</text></g>
  </g>
  <path d="M778 2049h80l3-3 3 3 4-3 4 3 4-3 4 3 4-2 5 2h47M703 2029h51M658 2172h129M662 2182h139M665 2143h84" stroke="#fff" stroke-width="2.200" fill="none"/>
  <path d="M940 2044l9 6-9 6zM949 2044l9 6-9 6zM833 2143l10 6-10 6zM843 2143l10 6-10 6z" fill="#a03aa0" stroke="#fff"/>
  <path d="M665 2050l6 5-6 5M675 2050l6 5-6 5" fill="none" stroke="#fff" stroke-width="3"/>
</svg>
</body>
</html>
```
FILE: styles.css
```css
* { box-sizing: border-box; }
body {
  margin: 0; width: 1815px; height: 2268px; position: relative; overflow: hidden;
  background: #000; font: 12px/12px "Liberation Serif", "Noto Sans CJK SC", sans-serif; color: #0a0a0c;
}
.defs { position: absolute; }
p, h1, h2, pre { margin: 0; font-weight: 400; }
i, em { font-style: normal; display: block; }
b { font-weight: 400; }

button {
  display: block; border: 0; padding: 0; height: 20px; width: 45px; flex: none;
  background: #6891b8; color: #060a1c; font: inherit; white-space: nowrap; text-align: center;
}
button.p { background: #0096ff; color: #05205c; }
input {
  display: block; border: 1px solid #8a8a8c; padding: 0 0 0 1px; margin: 0; height: 20px; width: 45px;
  flex: none; background: #fff; font: inherit; border-radius: 0; color: #111;
}
label { display: flex; align-items: center; gap: 4px; white-space: nowrap; }
.t { color: #4aa3e2; white-space: nowrap; }
.red { color: #e00d12; }
.green { color: #16c516; }
.cap { text-align: center; }
.box { border: 1px solid #bfbfc2; }
.rows { display: grid; align-items: start; align-content: start; }
.rd { width: 12px; height: 12px; border-radius: 50%; background: #fff; flex: none; }
.rd.on { background: #222; border: 3px solid #fff; }
.ck { width: 12px; height: 12px; background: #fff; flex: none; }
.radios { display: grid; align-content: start; }
.sel {
  height: 20px; background: #e1e1e1; border: 1px solid #b5b5b5; padding-left: 3px; line-height: 18px;
  display: flex; justify-content: space-between; flex: none;
}
.sel::after {
  content: ""; width: 6px; height: 6px; margin: 4px 6px 0 auto; transform: rotate(45deg);
  border: solid #555; border-width: 0 1px 1px 0; flex: none;
}
.old {
  width: 75px; height: 20px; border: 1px solid #77787c; background: linear-gradient(90deg, #e4e4e4 56px, #0a8cf0 56px);
  padding-left: 3px; line-height: 18px; display: flex; justify-content: space-between; white-space: nowrap;
}
.old::after { content: ""; border: solid transparent; border-width: 4px 3.5px 0; border-top-color: #12305c; margin: 7px 6px 0 0; }

/* windows */
.desk { display: grid; grid-template-columns: 604px 604px 604px; grid-auto-rows: 509px; }
.win { background: #3e3f44; display: flex; flex-direction: column; border-right: 1px solid #000; }
.win header, .dlg header { display: flex; align-items: center; color: #cfcfd1; flex: none; }
.win header { height: 29px; border: solid #000; border-width: 1px 0 1px 1px; background: linear-gradient(#36373b, #3b3c41); }
.ico { width: 22px; height: 20px; margin: 1px 0 0 5px; }
h2 { font-size: 14px; line-height: 20px; margin-left: 9px; flex: 1; white-space: pre; }
h2 span { font: 13px/20px "Liberation Mono", monospace; letter-spacing: -.8px; margin: 0 17px 0 4px; }
.min { width: 11px; height: 1px; background: #cfcfd1; margin-right: 32px; }
.x { width: 12px; height: 11px; margin-right: 12px; }
nav { position: relative; z-index: 1; display: flex; height: 21px; margin: 3px 0 -1px; padding-left: 8px; color: #d4d4d6; flex: none; }
nav svg { position: absolute; left: 0; top: 0; width: 603px; height: 21px; }
nav svg path { fill: #3e3f44; stroke: #c4c4c7; }
nav b { position: relative; width: 44px; text-align: center; line-height: 22px; white-space: nowrap; }
nav b:nth-of-type(1) { width: 62px; }
nav b:nth-of-type(2) { width: 105px; }
nav b:nth-of-type(3) { width: 67px; }
.page { width: 600px; height: 429px; margin-left: 2px; border: 1px solid #c4c4c7; flex: none; }
.win footer { display: flex; justify-content: center; white-space: pre; line-height: 31px; height: 27px; color: #4aa3e2; font-size: 14px; font-weight: 700; letter-spacing: 1px; }
.win footer span { font-family: "Liberation Mono", monospace; font-size: 12.5px; letter-spacing: .4px; }
.win footer em { width: 15px; font-size: 17px; }
.help { color: #4aa3e2; font-size: 16px; line-height: 16px; letter-spacing: 1px; font-weight: 500; text-align: center; white-space: nowrap; -webkit-text-stroke: .15px #4aa3e2; }
.help.sm { font-size: 14px; line-height: 14px; }

/* casino heist */
.p1 { display: flex; }
.p1 .box { width: 320px; height: 421px; margin: 4px 0 0 7px; padding: 6px 12px 0 7px; border-color: #7e7e82; grid-template-rows: 30px 26px 41px 30px 30px 27px 38px 40px 39px 39px 31px 30px; }
.p1 .rows > div { display: grid; }
.p1 .set { grid-template-columns: 57px 81px 50px 111px; align-items: center; }
.p1 .set .t { color: #2c7cba; }
.p1 .set button { width: 44px; }
.p1 .set button:last-child, .p1 .one button { width: 100%; }
.p1 .wide-l { grid-template-columns: 162px 131px; gap: 6px; }
.p1 .wide-r { grid-template-columns: 131px 162px; gap: 5px; }
.p1 .wide-l button, .p1 .wide-r button { width: 100%; }
.p1 .tall button { height: 32px; }
.p1 .mid button { height: 25px; }
.p1 .h30 button { height: 30px; }
.p1 .h30 { grid-template-columns: 128px 160px; gap: 8px; }
.p1 .side { width: 264px; margin-left: 6px; padding-top: 11px; display: flex; flex-direction: column; }
.p1 .help { align-self: center; }
.p1 .gtx { width: 161px; height: 30px; margin: 1px auto 13px; }
.p1 .foot { display: flex; }
.p1 .foot button { width: 103px; height: 30px; }
.p1 .radios { width: 53px; padding-left: 9px; gap: 7px; align-self: center; }

/* doomsday heist */
.p2 .top { display: flex; height: 265px; padding: 9px 0 0 9px; }
.p2 .box { width: 334px; height: 208px; padding: 5px 0 0 7px; }
.p2 .box.second { height: 49px; border-top: 0; padding-top: 7px; }
.p2 .pair { display: grid; grid-template-columns: 153px 153px; column-gap: 7px; grid-template-rows: 39px 39px 39px 41px; }
.p2 .pair button { width: 153px; height: 30px; }
.p2 .pair .low { margin-top: 2px; }
.p2 .pair .low1 { margin-top: 1px; }
.p2 .top .help { width: 254px; }
.p2 > .help { margin-top: 12px; width: 602px; }

/* island heist */
.p3 .top { display: flex; height: 355px; }
.p3 .box { width: 352px; height: 346px; margin: 9px 0 0 7px; padding: 5px 0 0 8px; display: flex; gap: 11px; }
.p3 .rows { grid-template-rows: 37px 38px 37px 39px 38px 38px 41px 38px 30px; width: 161px; }
.p3 .rows > button { width: 161px; height: 30px; }
.p3 .sel { width: 120px; margin: 3px 0 0 21px; }
.p3 .volt { display: flex; }
.p3 .volt button { width: 104px; height: 30px; }
.p3 .radios { margin-left: 9px; padding-top: 2px; gap: 4px; }
.p3 .top .help { width: 238px; padding-top: 5px; display: block; }
.p3 .bottom { display: flex; padding-left: 15px; }
.p3 .bottom button { width: 161px; height: 30px; margin: 3px 0 6px; }
.p3 .bottom .help { width: 376px; margin-left: 46px; padding-top: 3px; }

/* protection */
.p4 .box { width: 576px; height: 410px; margin: 8px 0 0 11px; padding: 7px 0 0 7px; display: flex; gap: 13px; }
.p4 .box div { display: flex; flex-direction: column; gap: 7px; }
.p4 button { width: 147px; height: 25px; }

/* recovery */
.p5 { display: flex; padding: 9px 0 0 7px; gap: 15px; }
.p5 .l { width: 280px; }
.p5 .r { width: 272px; }
.p5 .skills { height: 136px; padding: 7px; display: grid; grid-template-columns: 131px 131px; gap: 7px 5px; align-content: start; }
.p5 .skills button { width: 131px; height: 25px; }
.p5 .cash { height: 139px; border-top: 0; padding: 3px 0 0 6px; display: grid; grid-template-columns: 115px 38px 115px; }
.p5 .cash .rows { grid-template-rows: 14px 27px 27px 20px; }
.p5 .cash .t { text-align: center; }
.p5 .cash input { width: 111px; margin-left: 1px; }
.p5 .cash .rows > div { display: flex; gap: 8px; padding-left: 1px; }
.p5 .cash .rows > div button { width: 80px; }
.p5 .cash .rows > div button + button { width: 25px; }
.p5 .cash .rows > button { width: 115px; }
.p5 .safe { align-items: flex-start; padding: 22px 0 0 3px; gap: 3px; white-space: normal; }
.p5 .safe .ck { margin-top: 17px; }
.p5 .safe span { width: 12px; }
.p5 .arena { margin-top: 6px; height: 89px; padding-top: 5px; display: grid; grid-template-columns: 79px 48px 64px 48px; grid-template-rows: 18px 21px 20px 20px; text-align: center; align-items: start; }
.p5 .arena .cap { grid-column: 1 / -1; margin-left: 37px; }
.p5 .arena .t:not(.cap) { padding-top: 2px; }
.p5 .arena input { width: 48px; height: 16px; }
.p5 .arena button { grid-column: 1 / -1; margin-left: 116px; }
.p5 .unlock { margin-top: 9px; height: 32px; display: flex; align-items: center; padding-left: 15px; }
.p5 .unlock .sel { width: 103px; margin: 0 7px 0 9px; }
.p5 .awards { height: 354px; padding: 7px 0 0 6px; grid-template-columns: 125px 125px; column-gap: 5px; grid-template-rows: 25px 25px 25px 25px 27px 25px 26px 26px 27px 24px 25px 24px; }
.p5 .awards button { width: 125px; }
.p5 .level { margin-top: 4px; height: 56px; display: flex; padding: 5px 0 0 18px; }
.p5 .level > div:first-child { display: grid; grid-template-columns: 54px 71px 60px; width: 185px; align-items: center; row-gap: 5px; }
.p5 .level br { display: none; }
.p5 .level input { width: 111px; grid-column: span 2; }
.p5 .level button { margin-left: 31px; }
.p5 .level button + button { grid-column: 3; margin-left: 0; }
.p5 .level .radios { gap: 12px; padding: 5px 0 0 3px; }

/* session */
.p6 .box { width: 577px; height: 410px; margin: 7px 0 0 10px; display: flex; }
.p6 .players { width: 199px; margin: 9px 36px 0 27px; text-align: center; }
.p6 .players > .t { display: block; height: 22px; }
.list { background: #fff; height: 371px; border: 1px solid #999; display: flex; padding: 2px 0 0 3px; text-align: left; color: #000; }
.list pre { width: 95px; font: 11px/13px "Liberation Mono", monospace; letter-spacing: -.62px; }
.p6 .info { width: 136px; padding-top: 7px; text-align: center; grid-template-rows: 36px 27px 32px 28px 28px 31px 12px; }
.p6 .info button { width: 136px; height: 28px; }
.mono { font: 11px/12px "Liberation Mono", monospace; letter-spacing: -.62px; }
.p6 .acts { margin-left: 25px; padding-top: 7px; width: 148px; grid-template-rows: 32px 29px 35px 40px 24px; }
.p6 .acts > div { display: flex; padding-left: 8px; }
.p6 .acts .sel, .p6 .acts input { width: 96px; }
.p6 .acts div button { width: 41px; }
.p6 .acts > button { width: 144px; height: 28px; margin-left: 3px; }
.p6 .acts > .chk { width: 147px; height: 24px; margin-left: 0; display: flex; align-items: center; gap: 3px; padding-left: 1px; }

/* online */
.p7 { display: flex; }
.p7 .l { width: 351px; }
.p7 .items { margin-left: 47px; width: 267px; height: 150px; border: solid #bfbfc2; border-width: 0 1px; padding-left: 1px; display: grid; align-items: start; grid-template-columns: 42.5px 35px 41px 39px 41px 26px; grid-template-rows: 18px 25px 25px 25px 26px 20px; }
.p7 .items .cap { grid-column: 1 / -1; padding: 2px 0 0 36px; }
.p7 .items .t:not(.cap) { padding-top: 3px; }
.p7 .items input { width: 26px; height: 16px; }
.p7 .items button { grid-column: 1 / -1; margin-left: 109px; }
.p7 .self { margin-left: 15px; width: 336px; height: 275px; padding: 10px 0 0 7px; }
.p7 .times { display: flex; align-items: center; height: 22px; padding-bottom: 2px; }
.p7 .times .t:first-child { margin-left: 2px; }
.p7 .times input { width: 48px; margin: 0 5px 0 7px; }
.p7 .times .t:nth-child(4) { margin-left: 14px; margin-right: 4px; }
.p7 .cols { display: flex; gap: 13px; }
.p7 .cols .rows { grid-template-rows: 24px 24px 25px 25px 24px 25px 20px; }
.p7 .cols .rows + .rows { margin-top: 7px; grid-template-rows: 28px 27px 26px 26px 29px 20px; }
.p7 .cols button { width: 147px; }
.p7 .hp { display: flex; gap: 2px; }
.p7 .hp input { width: 30px; }
.p7 .hp button { width: 115px; }
.p7 .npc { display: flex; align-items: flex-end; margin-top: 18px; }
.p7 .npc button { width: 88px; }
.p7 .npc .radios { margin: 0 0 10px 9px; gap: 4px; }
.p7 .r { margin: 9px 0 0 24px; width: 192px; height: 419px; border-bottom: 0; display: flex; flex-direction: column; }
.p7 .r > .cap { padding-top: 5px; height: 23px; }
.p7 .kd { height: 168px; border-bottom: 1px solid #bfbfc2; display: flex; padding-left: 7px; gap: 6px; }
.p7 .kd .rows { grid-auto-rows: 27px; }
.p7 .kd button { width: 114px; }
.p7 .kd input { width: 48px; height: 16px; }
.p7 .ids { height: 81px; border-bottom: 1px solid #bfbfc2; padding: 9px 0 0 42px; }
.p7 .ids input { width: 105px; margin-bottom: 8px; }
.p7 .ids button { width: 105px; height: 18px; margin-bottom: 5px; }
.p7 .god { padding: 5px 0 0 22px; display: grid; gap: 5px; }
.p7 .god button { width: 147px; }
.p7 .mode { display: flex; gap: 18px; padding: 48px 0 0 14px; }

/* vehicle */
.p8 .top { display: flex; height: 110px; padding: 2px 0 0 7px; }
.p8 .spawn { width: 168px; height: 106px; padding: 2px 0 0 7px; }
.p8 .kind { display: flex; height: 18px; align-items: center; }
.p8 .kind .t { margin: 4px 20px 0 23px; }
.p8 .spawn .sel { width: 152px; }
.p8 .get { display: flex; gap: 17px; padding-top: 1px; height: 39px; }
.p8 .get button { margin-top: 8px; }
.p8 .get label { height: 18px; }
.p8 .spawn input { width: 152px; }
.p8 .more { margin-left: 6px; }
.p8 .acts { display: flex; gap: 10px; padding: 7px 0 0 2px; height: 54px; }
.p8 .acts button { width: 102px; }
.p8 .gift { width: 232px; height: 49px; padding: 5px 0 0 10px; }
.p8 .gift > div { display: flex; align-items: center; gap: 16px; }
.p8 .gift > div:first-child { height: 20px; padding: 0 43px 6px 13px; justify-content: space-between; }
.p8 .gift input { width: 152px; }
.p8 .tune { border: solid #bfbfc2; border-width: 1px 0; height: 307px; display: flex; }
.p8 .mini { width: 300px; border-right: 1px solid #bfbfc2; }
.p8 .tune .cap { display: block; height: 15px; padding-top: 1px; }
.p8 .cols { display: flex; }
.p8 .parts { display: grid; grid-template-columns: 48px 48px 28px; grid-auto-rows: 24px; align-items: start; }
.p8 .parts .t { text-align: center; padding: 2px 0 0 3px; }
.p8 .parts .sel { width: 44px; }
.p8 .sel { padding-left: 2px; }
.p8 .sel::after { margin-right: 5px; }
.p8 .mini .parts input { width: 39px; }
.p8 .tune button { width: 28px; }
.p8 .paint { width: 168px; padding-left: 17px; }
.p8 .paint .hue { display: block; padding: 3px 0 0 70px; height: 17px; }
.p8 .paint > div { display: flex; align-items: center; height: 32px; }
.p8 .paint > div > .t:first-child { width: 18px; }
.p8 .paint > div button { width: 76px; margin-left: auto; }
.p8 .paint > .livery { height: 25px; align-items: flex-end; }
.p8 .paint > .livery .t:first-child { width: 35px; margin-bottom: 4px; }
.p8 .paint .livery .sel { width: 44px; }
.p8 .paint > .livery button { width: 28px; margin: 0 40px 0 auto; }
.p8 .plate { display: flex; align-items: center; }
.p8 .plate .t { width: 48px; padding-left: 14px; }
.p8 .plate div { display: flex; background: #999; gap: 1px; padding: 1px; margin-right: 3px; }
.p8 .plate i { width: 13.4px; height: 18px; background: #fff; }
.p8 .plate button + button { width: 76px; margin-left: 21px; }
.p8 .pro { width: 298px; }
.p8 .pro .parts { grid-template-columns: 48px 47px 28px; width: 123px; }
.p8 .pro input { width: 43px; }
.p8 .pro .parts.b { width: 174px; grid-template-columns: 98px 48px 28px; }
.p8 .pro .parts.b .t { padding-left: 13px; }
.p8 .pro .parts.b .t.far { padding-left: 25px; }
.p8 .far + .sel { width: 48px; margin-left: -4px; }
.p8 .pull { display: flex; align-items: center; height: 24px; padding-bottom: 4px; }
.p8 .pull .t:first-child { width: 78px; margin-left: 9px; }
.p8 .pull input { margin-right: 5px; }
.p8 .pull .t:nth-child(4) { margin: 0 4px; }
.p8 .pull .sel { width: 47px; margin-right: 3px; }
.p8 .pull .read { width: 76px; margin-left: 36px; }

/* assets */
.p9 { display: flex; padding: 9px 0 0 7px; gap: 33px; }
.p9 .a { width: 145px; }
.p9 .cap { display: block; padding-top: 5px; height: 20px; }
.p9 .office { height: 97px; }
.p9 .office label { margin-left: 29px; height: 24px; }
.p9 .office button { margin: 3px 0 0 42px; }
.p9 .bunker { height: 49px; margin-top: 14px; }
.p9 .bunker button { width: 95px; margin: 3px 0 0 24px; }
.p9 .pairs { display: flex; gap: 26px; }
.p9 .club { width: 220px; height: 72px; }
.p9 .club > div { display: flex; justify-content: space-between; padding: 0 3px 0 4px; }
.p9 .club .sel { width: 64px; }
.p9 .club > .btns { padding: 5px 20px 0 22px; }
.p9 .club .btns button + button { width: 95px; }
.p9 .cargo { width: 145px; height: 72px; }
.p9 .cargo .sel { width: 128px; margin-left: 7px; }
.p9 .cargo button { margin: 6px 0 0 49px; }
.p9 .other { width: 220px; height: 120px; margin-top: 14px; display: flex; flex-direction: column; align-items: center; gap: 7px; padding-right: 2px; }
.p9 .other .cap { height: 16px; }
.p9 .other button { width: 202px; height: 25px; }
.p9 .night { width: 145px; height: 63px; margin-top: 16px; }
.p9 .night > div { display: flex; gap: 5px; padding: 6px 0 0 2px; }
.p9 .night button { width: 71px; }
.p9 .night input { width: 59px; height: 16px; margin-top: 1px; }
.p9 .casino { width: 388px; height: 130px; margin-top: 18px; }
.p9 .casino .cap { height: 23px; }
.p9 .cols { display: flex; padding-left: 8px; gap: 13px; }
.p9 .cols .rows { grid-template-rows: 34px 35px 25px; }
.p9 .cols button { width: 202px; height: 25px; }
.p9 .wheel { padding-top: 8px; }
.p9 .wheel .sel { width: 128px; margin: 0 0 20px 8px; }
.p9 .cols .wheel button { width: 148px; }

/* user */
.p10 .box { width: 586px; height: 408px; margin: 11px 0 0 6px; padding: 8px 0 0 7px; }
.p10 strong { display: block; color: #4aa3e2; font-size: 16px; line-height: 18px; letter-spacing: 1px; height: 33px; margin-left: -2px; }
.p10 .box > div { display: flex; align-items: center; }
.p10 button { width: 100px; }
.p10 .acts { gap: 12px; margin-top: -7px; }
.p10 .acts button:nth-child(n+4) { margin-left: -4px; }
.p10 .role { margin-top: 16px; }
.p10 .role .t { width: 120px; margin: 7px 154px 0 166px; }
.p10 .verify { margin-top: 20px; gap: 12px; }
.p10 .verify .t { margin-left: 101px; }
.p10 .status { margin-top: 12px; gap: 15px; }
.p10 .status i { width: 15px; height: 15px; border-radius: 50%; background: #05ec12; }
.p10 .make { width: 161px; height: 30px; margin: 177px 0 0 408px; }

/* dividend dialogs */
.dlg { position: absolute; background: #3e3f44; }
.dlg header { height: 32px; }
.dlg .ico { margin-left: 4px; }
.dlg h2 { margin-left: 4px; }
.dlg .x { margin-right: 8px; }
.dlg .body { margin-left: 2px; border: 1px solid #bfbfc2; }
.dlg .body > div { display: flex; align-items: center; height: 20px; }
.dlg .body > div > .t:first-child { width: 103px; padding-left: 3px; text-align: center; }
.dlg input { width: 125px; height: 16px; margin-right: 8px; }
.dlg button { margin-right: 6px; }
.dlg .now { width: 255px; margin-left: -6px; text-align: center; }
.d-casino { left: 716px; top: 1527px; width: 548px; height: 375px; }
.d-casino .body { width: 543px; height: 336px; padding-top: 5px; grid-template-rows: 32px 32px 32px 32px 48px 32px 32px 32px 32px 20px; }
.d-apt { left: 970px; top: 1902px; width: 294px; height: 309px; }
.d-apt .body { width: 289px; height: 272px; padding-top: 6px; grid-template-rows: 32px 32px 32px 33px 29px 24px 24px 23px 22px 12px; }
.d-apt header { height: 33px; }
.d-apt .body > .t { text-align: center; padding-left: 8px; }
.d-island { left: 1264px; top: 1527px; width: 548px; height: 557px; }
.d-island .body { width: 542px; height: 520px; padding-top: 6px; grid-template-rows: 32px 32px 32px 28px 26px 26px 32px 32px 32px 31px 31px 31px 32px 32px 29px 28px 20px; }

h1 {
  position: absolute; left: 57px; top: 2053px; font: 500 97px/110px "Noto Sans CJK SC", sans-serif;
  color: #1b2a80; -webkit-text-stroke: 4px #ffffcc; paint-order: stroke fill; white-space: nowrap;
}
.logo { position: absolute; left: 655px; top: 1990px; width: 305px; height: 225px; }
.mark { font-family: Inter, sans-serif; font-weight: 900; }
.mark .sq { font-family: "Liberation Sans", sans-serif; }
```
